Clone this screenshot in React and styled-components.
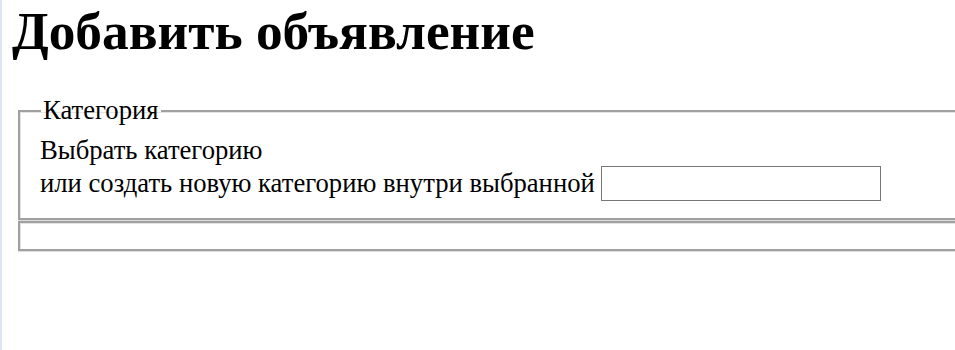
import React from 'react';
import styled, { createGlobalStyle } from 'styled-components';

const GlobalStyle = createGlobalStyle`
  html {
    overflow: hidden;
    background: #fff;
  }
  body {
    margin: 0;
    min-height: 350px;
    border-left: 2px solid #dce6f2;
    font-family: "Liberation Serif", "Times New Roman", serif;
    font-size: 26.67px;
    color: #000;
  }
`;

const Page = styled.div`
  padding: 0 0 0 9px;
`;

const Title = styled.h1`
  margin: 0 0 33px 1px;
  font-size: 53.33px;
  font-weight: bold;
  line-height: normal;
`;

// browser default fieldset padding: 0.35em 0.75em 0.625em
const Fieldset = styled.fieldset`
  width: 960px;
  margin: 0 0 1px 7px;
  padding: 9.33px 20px 16.67px;
  border: 2px solid #a0a0a0;
  box-shadow: inset 1px 1px 0 #e4e4e4, 0 1px 0 #dcdcdc;
`;

const Legend = styled.legend`
  padding: 0 2px;
  margin-left: 1px;
  line-height: normal;
`;

const Line = styled.div`
  display: flex;
  align-items: center;
  line-height: normal;
  gap: 6px;
`;

const TextInput = styled.input`
  width: 280px;
  height: 35px;
  box-sizing: border-box;
  border: 1px solid #767676;
  margin: 0;
  padding: 0 4px;
  font: inherit;
  background: #fff;
`;

export default function App() {
  return (
    <>
      <GlobalStyle />
      <Page>
        <Title>Добавить объявление</Title>
        <Fieldset>
          <Legend>Категория</Legend>
          <Line>Выбрать категорию</Line>
          <Line>
            или создать новую категорию внутри выбранной
            <TextInput type="text" />
          </Line>
        </Fieldset>
        <Fieldset />
      </Page>
    </>
  );
}
